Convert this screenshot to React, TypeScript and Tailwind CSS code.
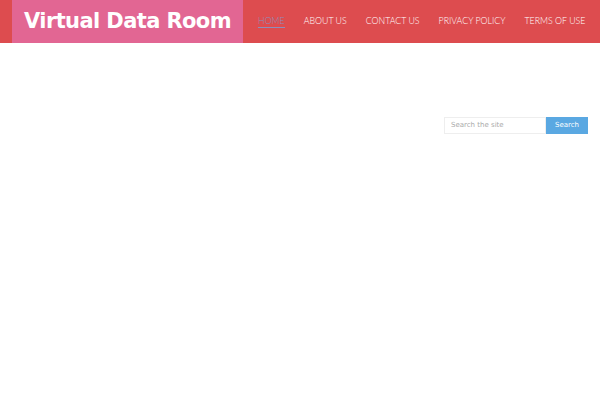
import React from "react";

export default function App() {
  const nav = ["HOME", "ABOUT US", "CONTACT US", "PRIVACY POLICY", "TERMS OF USE"];
  return (
    <div className="w-[600px] h-[400px] bg-white overflow-hidden">
      <header className="h-[43px] bg-[#dd4c4f] flex items-stretch">
        <div className="ml-[12px] w-[231px] shrink-0 bg-[#e26693] flex items-center pl-[12px]">
          <span
            className="text-white font-bold text-[21px] tracking-[-0.6px] leading-none whitespace-nowrap"
            style={{ fontFamily: '"DejaVu Sans", sans-serif' }}
          >
            Virtual Data Room
          </span>
        </div>
        <nav
          className="flex items-center pl-[15px] gap-[19px] text-[8.8px] font-light text-white whitespace-nowrap"
          style={{ fontFamily: 'Lato, "Open Sans", sans-serif' }}
        >
          {nav.map((n, i) => (
            <span
              key={n}
              className={
                i === 0
                  ? "text-[#8d8fbb] border-b border-[#8d8fbb] leading-[12px]"
                  : "leading-[12px] border-b border-transparent"
              }
            >
              {n}
            </span>
          ))}
        </nav>
      </header>
      <div className="flex justify-end pr-[12px] pt-[74px]">
        <div className="flex h-[17px]" style={{ fontFamily: '"DejaVu Sans", sans-serif' }}>
          <div className="w-[102px] border border-[#eeeeee] flex items-center pl-[6px] text-[7px] text-[#aaaaaa]">
            Search the site
          </div>
          <div className="w-[42px] bg-[#5aa8e2] flex items-center justify-center text-[7px] text-white">
            Search
          </div>
        </div>
      </div>
    </div>
  );
}
